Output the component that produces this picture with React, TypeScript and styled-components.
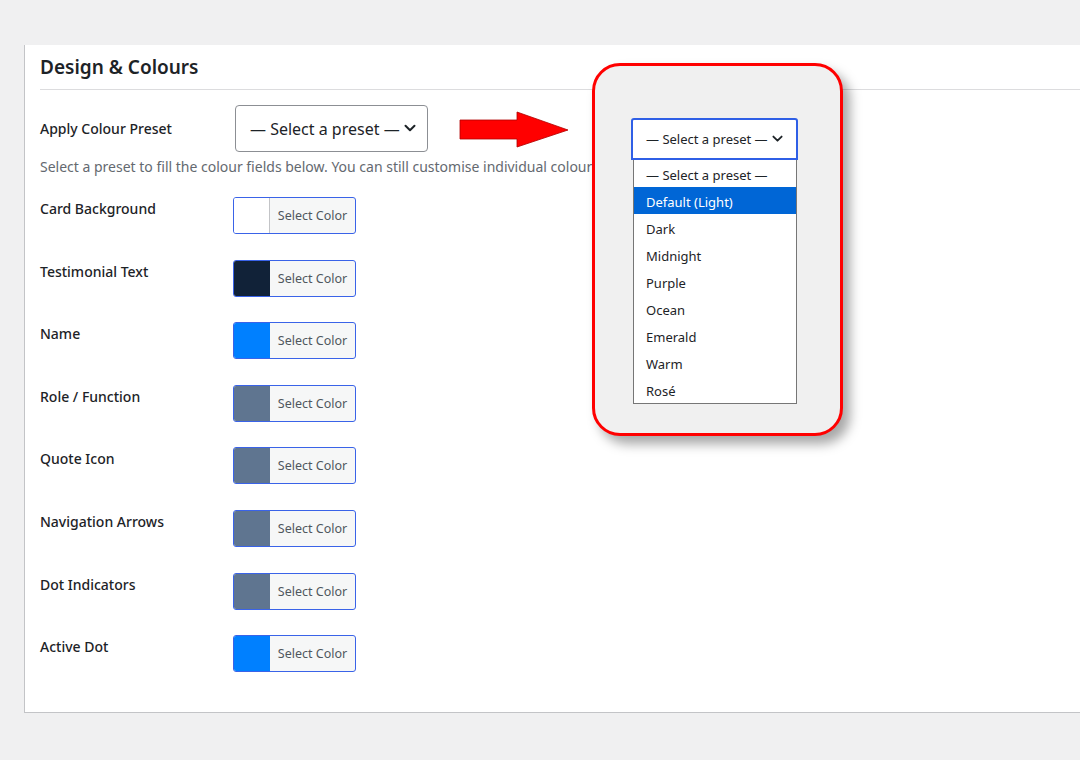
import React from "react";
import styled, { createGlobalStyle } from "styled-components";

const Global = createGlobalStyle`
  html, body { margin: 0; padding: 0; background: #f0f0f1; overflow: hidden; }
  body { font-family: "Noto Sans", "Open Sans", sans-serif; color: #1d2327; }
  * { box-sizing: border-box; }
`;

const Page = styled.div`
  position: relative;
  width: 1080px;
  height: 760px;
  padding-top: 45px;
  padding-left: 24px;
`;

const Card = styled.section`
  width: 1100px;
  background: #fff;
  border-left: 1px solid #c3c4c7;
  border-bottom: 1px solid #c3c4c7;
  padding: 0 15px 40px;
`;

const Header = styled.h2`
  margin: 0;
  height: 45px;
  display: flex;
  align-items: center;
  font-size: 19px;
  font-weight: 600;
  color: #1d2327;
  border-bottom: 1px solid #dcdcde;
`;

const PresetRow = styled.div`
  display: flex;
  align-items: center;
  margin-top: 15px;
`;

const Label = styled.div<{ $top?: number }>`
  width: 195px;
  flex: none;
  font-size: 14px;
  line-height: 20px;
  font-weight: 500;
  color: #1d2327;
  padding-top: ${(p) => p.$top ?? 0}px;
`;

const PresetSelect = styled.div`
  width: 193px;
  height: 47px;
  border: 1px solid #8c8f94;
  border-radius: 4px;
  display: flex;
  align-items: center;
  gap: 4px;
  padding: 0 0 0 14px;
  font-size: 16px;
  color: #1d2327;
  background: #fff;
  white-space: nowrap;
`;

const Description = styled.p`
  margin: 5px 0 0;
  font-size: 14px;
  line-height: 20px;
  color: #646970;
  white-space: nowrap;
`;

const Rows = styled.div`
  margin-top: 20px;
  display: flex;
  flex-direction: column;
  gap: 25.6px;
`;

const Row = styled.div`
  display: flex;
  align-items: flex-start;
`;

const ColorButton = styled.button`
  margin-left: -2px;
  width: 123px;
  height: 37px;
  padding: 0;
  display: flex;
  align-items: stretch;
  border: 1px solid #3a63e8;
  border-radius: 3px;
  background: #f6f7f7;
  overflow: hidden;
  font-family: inherit;
  cursor: pointer;
`;

const Swatch = styled.span<{ $color: string }>`
  width: 36px;
  flex: none;
  background: ${(p) => p.$color};
  border-right: 1px solid ${(p) => (p.$color === "#ffffff" ? "#c3c4c7" : p.$color)};
`;

const ButtonText = styled.span`
  flex: 1;
  display: flex;
  align-items: center;
  justify-content: center;
  font-size: 12.5px;
  color: #50575e;
`;

const Arrow = styled.svg`
  position: absolute;
  left: 459px;
  top: 111px;
`;

const Callout = styled.div`
  position: absolute;
  left: 592px;
  top: 63px;
  width: 251px;
  height: 373px;
  border: 3px solid #ff0000;
  border-radius: 28px;
  background: #f0f0f0;
  box-shadow: 7px 8px 12px rgba(0, 0, 0, 0.35);
  padding: 52px 0 0 36px;
`;

const OpenSelect = styled.div`
  width: 167px;
  height: 42px;
  border: 2px solid #2f5fe6;
  border-radius: 3px 3px 0 0;
  background: #fff;
  display: flex;
  align-items: center;
  gap: 4px;
  padding: 0 0 0 13px;
  font-size: 13px;
  color: #1d2327;
  white-space: nowrap;
`;

const OptionList = styled.ul`
  list-style: none;
  margin: 0 0 0 2px;
  padding: 0;
  width: 164px;
  border: 1px solid #767676;
  border-top: none;
  background: #fff;
`;

const Option = styled.li<{ $active?: boolean }>`
  height: 27px;
  display: flex;
  align-items: center;
  padding: 2px 0 0 12px;
  font-size: 13px;
  line-height: 18px;
  color: ${(p) => (p.$active ? "#fff" : "#1d2327")};
  background: ${(p) => (p.$active ? "#0066d6" : "transparent")};
  white-space: nowrap;
`;

const Chevron = ({ size = 12 }: { size?: number }) => (
  <svg width={size} height={size * 0.7} viewBox="0 0 12 8" fill="none">
    <path d="M1.5 1.5 6 6l4.5-4.5" stroke="#1d2327" strokeWidth="2" strokeLinecap="round" strokeLinejoin="round" />
  </svg>
);

const colorRows: { label: string; color: string }[] = [
  { label: "Card Background", color: "#ffffff" },
  { label: "Testimonial Text", color: "#112238" },
  { label: "Name", color: "#0080ff" },
  { label: "Role / Function", color: "#5f7590" },
  { label: "Quote Icon", color: "#5f7590" },
  { label: "Navigation Arrows", color: "#5f7590" },
  { label: "Dot Indicators", color: "#5f7590" },
  { label: "Active Dot", color: "#0080ff" },
];

const presets = [
  "— Select a preset —",
  "Default (Light)",
  "Dark",
  "Midnight",
  "Purple",
  "Ocean",
  "Emerald",
  "Warm",
  "Rosé",
];

export default function App() {
  return (
    <>
      <Global />
      <Page>
        <Card>
          <Header>Design &amp; Colours</Header>
          <PresetRow>
            <Label>Apply Colour Preset</Label>
            <PresetSelect>
              <span>— Select a preset —</span>
              <Chevron size={12} />
            </PresetSelect>
          </PresetRow>
          <Description>
            Select a preset to fill the colour fields below. You can still customise individual colours afterwards.
          </Description>
          <Rows>
            {colorRows.map((r) => (
              <Row key={r.label}>
                <Label $top={2}>{r.label}</Label>
                <ColorButton type="button">
                  <Swatch $color={r.color} />
                  <ButtonText>Select Color</ButtonText>
                </ColorButton>
              </Row>
            ))}
          </Rows>
        </Card>

        <Arrow width="112" height="38" viewBox="0 0 112 38">
          <polygon
            points="1,9 58,9 58,1 109,19 58,36 58,28 1,28"
            fill="#ff0000"
            stroke="#b00000"
            strokeWidth="0.8"
          />
        </Arrow>

        <Callout>
          <OpenSelect>
            <span>— Select a preset —</span>
            <Chevron size={11} />
          </OpenSelect>
          <OptionList>
            {presets.map((p, i) => (
              <Option key={p} $active={i === 1}>
                {p}
              </Option>
            ))}
          </OptionList>
        </Callout>
      </Page>
    </>
  );
}
